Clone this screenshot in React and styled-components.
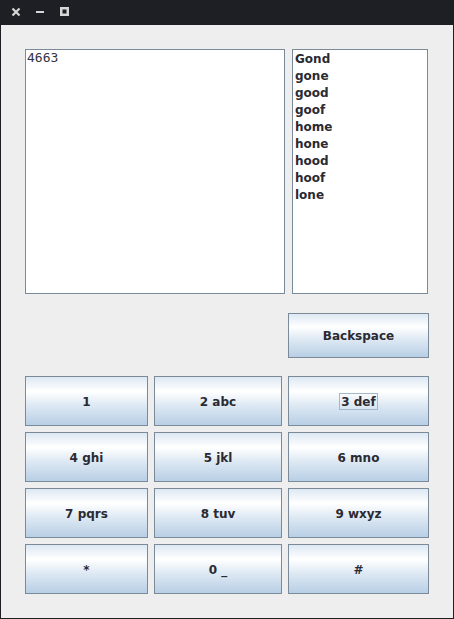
import React from "react";
import styled, { createGlobalStyle } from "styled-components";

const GlobalStyle = createGlobalStyle`
  html, body {
    margin: 0;
    padding: 0;
    background: #eeeeee;
  }
`;

const Frame = styled.div`
  width: 454px;
  height: 619px;
  box-sizing: border-box;
  display: flex;
  flex-direction: column;
  border: 1px solid #1d1f25;
  border-top: none;
  background: #eeeeee;
  font-family: "DejaVu Sans", sans-serif;
`;

const TitleBar = styled.div`
  height: 25px;
  flex: none;
  background: #1d1f25;
  display: flex;
  align-items: center;
  padding-left: 11px;
  gap: 14px;
  margin: 0 -1px;
`;

const TitleIcon = styled.svg`
  width: 10px;
  height: 10px;
  display: block;
  margin-top: -1px;
`;

const Body = styled.div`
  flex: 1;
  padding: 24px 24px 24px 24px;
  display: flex;
  flex-direction: column;
`;

const TopRow = styled.div`
  display: flex;
  gap: 7px;
  height: 245px;
`;

const TextArea = styled.div`
  width: 260px;
  box-sizing: border-box;
  border: 1px solid #7a8a99;
  background: #ffffff;
  padding: 0 1px;
  font-family: "DejaVu Sans Mono", monospace;
  font-size: 13px;
  line-height: 15px;
  color: #333344;
`;

const WordList = styled.ul`
  width: 136px;
  box-sizing: border-box;
  margin: 0;
  padding: 1px 2px 0;
  list-style: none;
  border: 1px solid #7a8a99;
  background: #ffffff;
`;

const Word = styled.li`
  height: 17px;
  line-height: 17px;
  font-size: 12px;
  font-weight: bold;
  color: #2a2a33;
`;

const ActionRow = styled.div`
  display: flex;
  justify-content: flex-end;
  margin-top: 19px;
`;

const Keypad = styled.div`
  margin-top: 18px;
  display: grid;
  grid-template-columns: 123px 128px 141px;
  grid-auto-rows: 50px;
  gap: 6px;
`;

const Key = styled.button`
  width: ${(p) => (p.$width ? `${p.$width}px` : "auto")};
  height: ${(p) => (p.$height ? `${p.$height}px` : "auto")};
  box-sizing: border-box;
  margin: 0;
  padding: 0;
  border: 1px solid #7a8a99;
  border-radius: 0;
  background: linear-gradient(
    #dde8f3 0%,
    #ffffff 30%,
    #dde8f3 60%,
    #b8cfe5 100%
  );
  font-family: "DejaVu Sans", sans-serif;
  font-size: 12px;
  font-weight: bold;
  color: #2a2a33;
  display: flex;
  align-items: center;
  justify-content: center;
  cursor: pointer;
`;

const KeyLabel = styled.span`
  padding: 1px 1px 0;
  border: 1px solid ${(p) => (p.$focused ? "#a3b8cc" : "transparent")};
  line-height: 14px;
  white-space: pre;
`;

const words = ["Gond", "gone", "good", "goof", "home", "hone", "hood", "hoof", "lone"];

const keys = ["1", "2 abc", "3 def", "4 ghi", "5 jkl", "6 mno", "7 pqrs", "8 tuv", "9 wxyz", "*", "0 _", "#"];

function App() {
  return (
    <>
      <GlobalStyle />
      <Frame>
        <TitleBar>
          <TitleIcon viewBox="0 0 10 10">
            <path d="M1.5 1.5 L8.5 8.5 M8.5 1.5 L1.5 8.5" stroke="#d6d6d6" strokeWidth="2.2" />
          </TitleIcon>
          <TitleIcon viewBox="0 0 10 10">
            <rect x="1" y="4" width="8" height="2" fill="#d6d6d6" />
          </TitleIcon>
          <TitleIcon viewBox="0 0 10 10">
            <rect x="2.25" y="1.25" width="6.5" height="6.5" fill="none" stroke="#d6d6d6" strokeWidth="2.5" />
          </TitleIcon>
        </TitleBar>
        <Body>
          <TopRow>
            <TextArea>4663</TextArea>
            <WordList>
              {words.map((w) => (
                <Word key={w}>{w}</Word>
              ))}
            </WordList>
          </TopRow>
          <ActionRow>
            <Key $width={141} $height={45}>
              <KeyLabel>Backspace</KeyLabel>
            </Key>
          </ActionRow>
          <Keypad>
            {keys.map((k) => (
              <Key key={k}>
                <KeyLabel $focused={k === "3 def"}>{k}</KeyLabel>
              </Key>
            ))}
          </Keypad>
        </Body>
      </Frame>
    </>
  );
}

export default App;
